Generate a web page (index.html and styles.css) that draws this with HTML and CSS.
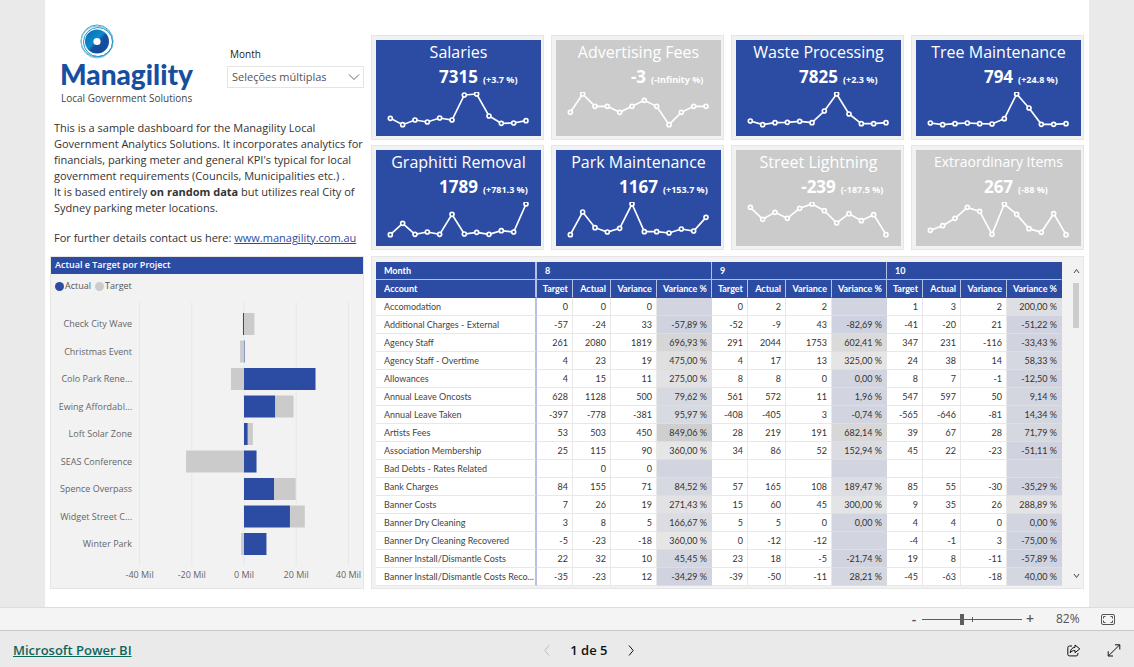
FILE: index.html
```html
<!DOCTYPE html>
<html lang="pt">
<head>
<meta charset="utf-8">
<title>Managility – Local Government Solutions</title>
<link rel="stylesheet" href="styles.css">
</head>
<body>
<main class="canvas">
  <div class="report">
    <section class="side">
      <header class="intro-head">
        <div class="brand">
          <svg class="brand-mark" viewBox="0 0 36 36" aria-hidden="true">
            <defs>
              <linearGradient id="disc" x1="0" y1="0" x2="1" y2="1">
                <stop offset="0" stop-color="#1450a0"/><stop offset=".2" stop-color="#0a78c0"/><stop offset=".45" stop-color="#0e8acb"/><stop offset=".55" stop-color="#1450a0"/><stop offset="1" stop-color="#16479a"/>
              </linearGradient>
            </defs>
            <circle cx="18" cy="17" r="16" fill="none" stroke="#3aa5cf" stroke-width="1"/>
            <circle cx="18" cy="18" r="16" fill="none" stroke="#7cc3dd" stroke-width="1"/>
            <circle cx="19" cy="18" r="14.5" fill="none" stroke="#2b93c4" stroke-width="1"/>
            <circle cx="18" cy="17.5" r="12" fill="url(#disc)"/>
            <circle cx="18" cy="17.5" r="3.6" fill="#fff"/>
          </svg>
          <div class="brand-name">Managility</div>
          <div class="brand-sub">Local Government Solutions</div>
        </div>
        <div class="slicer">
          <label for="month">Month</label>
          <div class="select-box">
            <select id="month"><option>Seleções múltiplas</option></select>
            <svg viewBox="0 0 12 8" aria-hidden="true"><path d="M1 1.5 6 6.5 11 1.5"/></svg>
          </div>
        </div>
      </header>
      <div class="about">
        <p>This is a sample dashboard for the Managility Local<br>Government Analytics Solutions. It incorporates analytics for<br>financials, parking meter and general KPI's typical for local<br>government requirements (Councils, Municipalities etc.) .<br>It is based entirely <b>on random data</b> but utilizes real City of<br>Sydney parking meter locations.</p>
        <p>For further details contact us here: <a href="#contact">www.managility.com.au</a></p>
      </div>
      <section class="panel chart">
        <h2>Actual e Target por Project</h2>
        <ul class="legend"><li class="actual">Actual</li><li class="target">Target</li></ul>
        <svg class="bars" id="bars" viewBox="51 295 312 290" role="img" aria-label="Actual e Target por Project"></svg>
      </section>
    </section>
    <section class="main">
      <div class="cards" id="cards"></div>
      <div class="panel matrix">
        <div class="matrix-view">
          <table>
            <colgroup id="cols"><col></colgroup>
            <thead>
              <tr class="months"><th scope="col">Month</th><th colspan="4">8</th><th colspan="4">9</th><th colspan="4">10</th></tr>
              <tr class="measures" id="measures"><th scope="col">Account</th></tr>
            </thead>
            <tbody id="rows"></tbody>
          </table>
        </div>
        <div class="scroller">
          <button type="button" aria-label="Scroll up"><svg viewBox="0 0 7 7"><path d="M1 5 3.5 1.5 6 5"/></svg></button>
          <div class="scroll-track"><div class="scroll-thumb"></div></div>
          <button type="button" aria-label="Scroll down"><svg viewBox="0 0 7 7"><path d="M1 2 3.5 5.5 6 2"/></svg></button>
        </div>
      </div>
    </section>
  </div>
</main>
<div class="zoombar">
  <button type="button" class="step" aria-label="Zoom out">-</button>
  <div class="range"><input type="range" min="0" max="100" value="40" aria-label="Zoom"></div>
  <button type="button" class="step" aria-label="Zoom in">+</button>
  <span class="percent">82%</span>
  <button type="button" class="icon" aria-label="Fit to page">
    <svg width="14" height="11" viewBox="0 0 14 11"><rect x=".5" y=".5" width="13" height="10" rx="1.5"/><path d="M2.5 4.5v-2h2M9.5 2.5h2v2M11.5 6.5v2h-2M4.5 8.5h-2v-2"/></svg>
  </button>
</div>
<footer class="statusbar">
  <div><a class="product" href="#powerbi">Microsoft Power BI</a></div>
  <nav class="pager">
    <button type="button" class="icon" disabled aria-label="Previous page"><svg width="6" height="11" viewBox="0 0 6 11"><path d="M5 .5 .8 5.500 5 10.500"/></svg></button>
    <span>1 de 5</span>
    <button type="button" class="icon" aria-label="Next page"><svg width="6" height="11" viewBox="0 0 6 11"><path d="M1 .5 5.200 5.500 1 10.500"/></svg></button>
  </nav>
  <div class="actions">
    <button type="button" class="icon" aria-label="Share"><svg width="14" height="13" viewBox="0 0 14 13"><path d="M5 2H2.500A1.700 1.700 0 0 0 .8 3.700v6.500A1.700 1.700 0 0 0 2.500 11.900h6.700A1.700 1.700 0 0 0 10.900 10.200V9M8 1l4.800 3.900L8 8.700V6.500C5.700 6.500 4.400 7.200 3.200 8.800 3.500 5.800 5 3.500 8 3.300Z"/></svg></button>
    <button type="button" class="icon" aria-label="Full screen"><svg width="14" height="13" viewBox="0 0 14 13"><path d="M1.500 11.800 12.500 1M8 .8h4.800v4.700M1.200 7.300V12H6"/></svg></button>
  </div>
</footer>
<script src="app.js"></script>
</body>
</html>
```

FILE: styles.css
```css
:root {
  --blue: #2c4ca3;
  --grey: #cbcbcb;
  --panel: #f2f2f2;
  --line: #e6e6e6;
}
* { box-sizing: border-box; }
body {
  margin: 0;
  min-height: 100vh;
  display: flex;
  flex-direction: column;
  background: #eaeaea;
  color: #333;
  font: 11px/16px "Open Sans", "Noto Sans", sans-serif;
}
button { padding: 0; border: 0; background: none; color: inherit; font: inherit; }
h2, p, ul { margin: 0; padding: 0; }
svg { display: block; }

.canvas { flex: 1; display: flex; padding: 0 45px; }
.report {
  flex: 1;
  display: grid;
  grid-template-columns: minmax(0, 314fr) minmax(0, 713fr);
  gap: 7px;
  padding: 0 5px 18px;
  background: #fff;
}
.side, .main { display: flex; flex-direction: column; }
.side { padding-top: 24px; }
.main { padding-top: 35px; gap: 6px; }
.panel { background: var(--panel); border: 1px solid var(--line); }

/* Brand and slicer */
.intro-head { display: flex; justify-content: space-between; padding-left: 10px; height: 96px; }
.brand-mark { width: 36px; height: 36px; margin-left: 19px; }
.brand-name { color: #174f9f; font: 900 28px/28px Lato, sans-serif; }
.brand-sub { font-size: 10px; line-height: 20px; padding-left: 1px; color: #444; }
.slicer { width: 137px; padding-top: 22px; }
.slicer label { display: block; padding-left: 3px; font-size: 10px; line-height: 16px; color: #222; }
.select-box { position: relative; margin-top: 4px; }
.select-box select {
  appearance: none;
  width: 100%;
  height: 22px;
  padding: 0 4px;
  border: 1px solid #e4e4e4;
  border-radius: 0;
  background: #fff;
  color: #555;
  font: inherit;
}
.select-box svg { position: absolute; right: 4px; top: 7px; width: 12px; height: 8px; fill: none; stroke: #666; pointer-events: none; }

.about { display: grid; align-content: start; gap: 14px; padding-left: 4px; height: 136px; font-size: 11px; white-space: nowrap; }
.about a { color: #2c4ca3; }

/* Bar chart */
.chart { flex: 1; }
.chart h2 { padding: 0 4px 2px; background: var(--blue); color: #fff; font-size: 9px; font-weight: 600; line-height: 15px; }
.legend { display: flex; gap: 4px; padding: 3px 4px 0; list-style: none; font-size: 9px; line-height: 18px; color: #555; }
.legend li { display: flex; align-items: center; gap: 1px; }
.legend li::before { content: ""; width: 9px; height: 9px; border-radius: 50%; background: var(--grey); }
.legend .actual::before { background: var(--blue); }
.bars { width: 100%; }
.bars text { font-size: 9px; fill: #666; }
.bars .grid { stroke: #e8e8e8; }
.bars .a { fill: var(--blue); }
.bars .t { fill: var(--grey); }

/* KPI cards */
.cards { display: grid; grid-template-columns: repeat(4, minmax(0, 1fr)); gap: 5px 7px; }
.card { padding: 4px 2px 3px 4px; background: var(--panel); border: 1px solid var(--line); }
.card-body { background: var(--blue); color: #fff; text-align: center; }
.card-body.muted { background: var(--grey); }
.card h3 { margin: 0; font-size: 16px; font-weight: 400; line-height: 24px; white-space: nowrap; }
.card h3.long { font-size: 14px; }
.kpi { display: grid; grid-template-columns: 1fr auto 1fr; align-items: baseline; line-height: 26px; height: 28px; }
.kpi b { grid-column: 2; font-size: 17px; }
.kpi span { padding-left: 5px; font-size: 9px; font-weight: 700; text-align: left; white-space: nowrap; }
.spark { width: 100%; stroke: #fff; stroke-width: 5; }
.spark polyline { fill: none; }
.spark circle { fill: var(--blue); }
.muted .spark circle { fill: var(--grey); }

/* Matrix */
.matrix { flex: 1; display: flex; padding: 5px 0 1px 4px; }
.matrix-view { flex: 1; height: 325px; overflow: hidden; }
table { width: 100%; table-layout: fixed; border-collapse: separate; border-spacing: 0; font-family: Lato, sans-serif; font-size: 9px; }
.c-target { width: 36px; }
.c-actual { width: 38px; }
.c-variance { width: 46px; }
.c-percent { width: 55px; }
th, td {
  height: 18px;
  padding: 0 4px 0 0;
  overflow: hidden;
  border-right: 1px solid #e8e8e8;
  border-bottom: 1px solid #e8e8e8;
  background: #fff;
  line-height: 17px;
  text-align: right;
  white-space: nowrap;
  text-overflow: ellipsis;
}
thead th { background: var(--blue); border-color: #b4c0e0; color: #fff; font-weight: 700; }
.months th { padding-left: 8px; text-align: left; }
.measures th { border-bottom-color: var(--blue); }
thead th:last-child { border-right-color: var(--blue); }
tr > :first-child { padding: 0 0 0 8px; text-align: left; border-right: 2px solid #b4c0e6; }
tbody th { color: #444; font-weight: 400; }
td.pct { border-color: transparent; border-bottom-color: #dcdee4; }
.scroller { width: 21px; display: flex; flex-direction: column; align-items: center; padding: 6px 0 8px 7px; }
.scroller svg { width: 7px; height: 7px; fill: none; stroke: #444; }
.scroll-track { flex: 1; padding-top: 8px; }
.scroll-thumb { width: 6px; height: 45px; background: #ccc; }

/* Bottom bars */
.icon svg { fill: none; stroke: currentColor; }
.zoombar {
  display: flex;
  align-items: center;
  justify-content: flex-end;
  height: 24px;
  padding-right: 19px;
  border-top: 1px solid #ddd;
  border-bottom: 1px solid #c8c8c8;
  background: #f4f4f4;
  color: #555;
}
.step { width: 16px; font-size: 14px; font-weight: 600; line-height: 20px; }
.range { position: relative; width: 100px; height: 20px; }
.range::after { content: ""; position: absolute; left: 50px; top: 8px; width: 1px; height: 5px; background: #605e5c; }
.range input { appearance: none; display: block; width: 100%; height: 20px; margin: 0; background: linear-gradient(#605e5c, #605e5c) center / 100% 1px no-repeat; }
.range input::-webkit-slider-thumb { appearance: none; width: 4px; height: 11px; background: #605e5c; }
.percent { width: 63px; padding-left: 18px; font-size: 12px; }
.statusbar {
  display: grid;
  grid-template-columns: 109fr auto 100fr;
  align-items: center;
  height: 36px;
  padding: 2px 13px 0;
  background: #eaeaea;
  color: #111;
}
.product { color: #0f665a; font-size: 13px; font-weight: 600; line-height: 20px; }
.pager { display: flex; align-items: center; gap: 20px; font-size: 13px; font-weight: 600; line-height: 20px; }
.pager .icon:disabled { color: #bbb; }
.actions { display: flex; justify-content: flex-end; gap: 26px; }
```

FILE: app.js
```javascript
// KPI cards: title, value, change, muted, sparkline heights (top = 0)
const cards = [
  ["Salaries", "7315", "(+3.7 %)", 0, [79, 98, 84, 90, 78, 84, 9, 6, 72, 94, 93, 86]],
  ["Advertising Fees", "-3", "(-Infinity %)", 1, [61, 6, 43, 43, 61, 43, 25, 43, 98, 61, 43, 43]],
  ["Waste Processing", "7825", "(+2.3 %)", 0, [87, 98, 92, 91, 88, 92, 57, 6, 66, 95, 95, 92]],
  ["Tree Maintenance", "794", "(+24.8 %)", 0, [93, 98, 95, 93, 95, 96, 80, 6, 48, 97, 97, 95]],
  ["Graphitti Removal", "1789", "(+781.3 %)", 0, [98, 64, 97, 90, 97, 37, 96, 91, 97, 86, 90, 6]],
  ["Park Maintenance", "1167", "(+153.7 %)", 0, [98, 30, 77, 90, 79, 6, 89, 89, 93, 81, 87, 46]],
  ["Street Lightning", "-239", "(-187.5 %)", 1, [16, 52, 31, 49, 19, 6, 26, 63, 35, 56, 38, 98]],
  ["Extraordinary Items", "267", "(-88 %)", 1, [85, 71, 49, 16, 28, 97, 6, 37, 80, 91, 35, 98]]
];
document.getElementById("cards").innerHTML = cards.map(([title, value, change, muted, ys]) => {
  const pts = ys.map((y, i) => [43 + i * 37, y]);
  return `<article class="card"><div class="card-body${muted ? " muted" : ""}"><h3${title.length > 18 ? ' class="long"' : ""}>${title}</h3>
    <div class="kpi"><b>${value}</b><span>${change}</span></div>
    <svg class="spark" viewBox="0 0 495 132" aria-hidden="true"><polyline points="${pts.join(" ")}"/>
    ${pts.map(p => `<circle cx="${p[0]}" cy="${p[1]}" r="6"/>`).join("")}</svg></div></article>`;
}).join("");

// Bar chart: project, actual [from, to], target [from, to], in millions
const projects = [
  ["Check City Wave", [-0.4, 0], [0, 4]],
  ["Christmas Event", [0, 0.2], [-1.5, 0]],
  ["Colo Park Rene...", [0, 27.4], [-5, 0]],
  ["Ewing Affordabl...", [0, 11.9], [11.9, 19]],
  ["Loft Solar Zone", [0, 1.4], [1.4, 3.4]],
  ["SEAS Conference", [0, 4.8], [-22.2, 0]],
  ["Spence Overpass", [0, 11.5], [11.5, 19.8]],
  ["Widget Street C...", [0, 17.6], [17.6, 23.3]],
  ["Winter Park", [0, 8.6], [-1.1, 0]]
];
const x = v => 244 + v * 2.61;
const bar = (cls, [a, b], y) => `<rect class="${cls}" x="${x(a)}" y="${y}" width="${x(b) - x(a)}" height="22"/>`;
document.getElementById("bars").innerHTML =
  [-40, -20, 0, 20, 40].map(v =>
    `<path class="grid" d="M${x(v)} 302V566"/><text x="${x(v)}" y="578" text-anchor="middle">${v} Mil</text>`).join("") +
  projects.map(([name, a, t], i) => {
    const y = 313 + i * 27.5;
    return `<text x="132" y="${y + 14}" text-anchor="end">${name}</text>${bar("t", t, y)}${bar("a", a, y)}`;
  }).join("");

// Matrix rows: account | four measures for each of the three months
const data = `Accomodation|0|0|0||0|2|2||1|3|2|200,00
Additional Charges - External|-57|-24|33|-57,89|-52|-9|43|-82,69|-41|-20|21|-51,22
Agency Staff|261|2080|1819|696,93|291|2044|1753|602,41|347|231|-116|-33,43
Agency Staff - Overtime|4|23|19|475,00|4|17|13|325,00|24|38|14|58,33
Allowances|4|15|11|275,00|8|8|0|0,00|8|7|-1|-12,50
Annual Leave Oncosts|628|1128|500|79,62|561|572|11|1,96|547|597|50|9,14
Annual Leave Taken|-397|-778|-381|95,97|-408|-405|3|-0,74|-565|-646|-81|14,34
Artists Fees|53|503|450|849,06|28|219|191|682,14|39|67|28|71,79
Association Membership|25|115|90|360,00|34|86|52|152,94|45|22|-23|-51,11
Bad Debts - Rates Related||0|0|||||||||
Bank Charges|84|155|71|84,52|57|165|108|189,47|85|55|-30|-35,29
Banner Costs|7|26|19|271,43|15|60|45|300,00|9|35|26|288,89
Banner Dry Cleaning|3|8|5|166,67|5|5|0|0,00|4|4|0|0,00
Banner Dry Cleaning Recovered|-5|-23|-18|360,00|0|-12|-12||-4|-1|3|-75,00
Banner Install/Dismantle Costs|22|32|10|45,45|23|18|-5|-21,74|19|8|-11|-57,89
Banner Install/Dismantle Costs Reco...|-35|-23|12|-34,29|-39|-50|-11|28,21|-45|-63|-18|40,00`;
const measures = [["target", "Target"], ["actual", "Actual"], ["variance", "Variance"], ["percent", "Variance %"]];
const times3 = f => [0, 1, 2].map(() => measures.map(f).join("")).join("");
document.getElementById("cols").insertAdjacentHTML("beforeend", times3(m => `<col class="c-${m[0]}">`));
document.getElementById("measures").insertAdjacentHTML("beforeend", times3(m => `<th scope="col">${m[1]}</th>`));

// Three-stop colour scale for the percentage cells
const stops = [[-90, [206, 209, 223]], [0, [210, 213, 223]], [350, [230, 230, 230]], [850, [207, 207, 207]]];
function shade(text) {
  const v = parseFloat(text.replace(",", ".")) || 0;
  const k = v < 0 ? 0 : v < 350 ? 1 : 2;
  const [v0, c0] = stops[k], [v1, c1] = stops[k + 1];
  return `rgb(${c0.map((c, i) => Math.round(c + (c1[i] - c) * (v - v0) / (v1 - v0))).join(",")})`;
}
document.getElementById("rows").innerHTML = data.split("\n").map(line => {
  const [name, ...cells] = line.split("|");
  return `<tr><th scope="row">${name}</th>${cells.slice(0, 12).map((c, i) =>
    i % 4 === 3 ? `<td class="pct" style="background:${shade(c)}">${c ? c + " %" : ""}</td>` : `<td>${c}</td>`).join("")}</tr>`;
}).join("");
```
